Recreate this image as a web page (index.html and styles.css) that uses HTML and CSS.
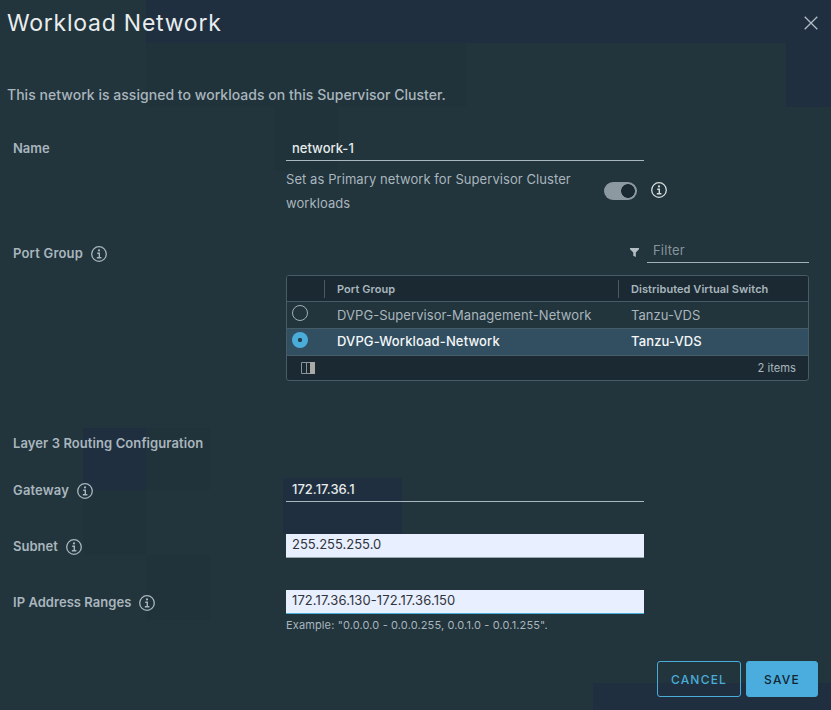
FILE: index.html
```
<!DOCTYPE html>
<html lang="en">
<head>
<meta charset="utf-8">
<title>Workload Network</title>
<link rel="stylesheet" href="styles.css">
</head>
<body>
<svg class="defs" aria-hidden="true">
  <symbol id="info" viewBox="0 0 16 16">
    <circle cx="8" cy="8" r="7.3" fill="none" stroke="currentColor" stroke-width="1.3"/>
    <circle cx="8" cy="4.4" r="1.1" fill="currentColor"/>
    <path d="M6.2 7.2h2.1v4.3M5.8 11.7h4.6" fill="none" stroke="currentColor" stroke-width="1.4"/>
  </symbol>
</svg>
<main class="dialog">
  <header class="header">
    <h1 class="title">Workload Network</h1>
    <svg class="close" viewBox="0 0 14 14"><path d="M.7.7l12.6 12.6M13.3.7L.7 13.3"/></svg>
  </header>
  <p class="intro">This network is assigned to workloads on this Supervisor Cluster.</p>

  <section class="row row-name">
    <div class="label"><span>Name</span></div>
    <div class="control">
      <div class="input"><span>network-1</span></div>
      <div class="primary">
        <p class="primary-text">Set as Primary network for Supervisor Cluster workloads</p>
        <span class="toggle"></span>
        <svg class="info info-light"><use href="#info"/></svg>
      </div>
    </div>
  </section>

  <section class="row row-port">
    <div class="label"><span class="t-port">Port Group</span><svg class="info"><use href="#info"/></svg></div>
    <div class="control">
      <div class="filter">
        <svg class="funnel" viewBox="0 0 9 9"><path d="M0 0h9v1.2L5.8 4.6V9L3.3 7.8V4.6L0 1.2z"/></svg>
        <div class="filter-input">Filter</div>
      </div>
      <div class="table">
        <div class="tr head"><span class="c1"></span><span class="c2"><b>Port Group</b></span><span class="c3"><b>Distributed Virtual Switch</b></span></div>
        <div class="tr"><span class="c1"><i class="radio"></i></span><span class="c2">DVPG-Supervisor-Management-Network</span><span class="c3">Tanzu-VDS</span></div>
        <div class="tr selected"><span class="c1"><i class="radio checked"></i></span><span class="c2">DVPG-Workload-Network</span><span class="c3">Tanzu-VDS</span></div>
        <div class="foot">
          <svg class="columns" viewBox="0 0 14 12"><path d="M.5.5h13v11H.5zM5.5 .5v11" fill="none" stroke="#8d9497"/><path d="M9 0H14v12H9z" fill="#aaa9a4"/></svg>
          <span>2 items</span>
        </div>
      </div>
    </div>
  </section>

  <h2 class="section-title">Layer 3 Routing Configuration</h2>

  <section class="row row-field">
    <div class="label"><span class="t-gateway">Gateway</span><svg class="info"><use href="#info"/></svg></div>
    <div class="control"><div class="input gateway"><span>172.17.36.1</span></div></div>
  </section>
  <section class="row row-field">
    <div class="label"><span>Subnet</span><svg class="info"><use href="#info"/></svg></div>
    <div class="control"><div class="input filled"><span>255.255.255.0</span></div></div>
  </section>
  <section class="row row-field">
    <div class="label"><span class="t-ranges">IP Address Ranges</span><svg class="info"><use href="#info"/></svg></div>
    <div class="control">
      <div class="input filled focused"><span class="t-range">172.17.36.130-172.17.36.150</span></div>
      <p class="example">Example: "0.0.0.0 - 0.0.0.255, 0.0.1.0 - 0.0.1.255".</p>
    </div>
  </section>

  <footer class="actions">
    <button class="btn cancel">CANCEL</button>
    <button class="btn save">SAVE</button>
  </footer>
</main>
</body>
</html>
```

FILE: styles.css
```
* { box-sizing: border-box; }
body {
  margin: 0;
  font-family: Inter, "Open Sans", sans-serif;
  font-size: 13px;
  color: #a9b6be;
  background: #22343c;
}
h1, h2, p { margin: 0; font-weight: 400; }
.defs { position: absolute; width: 0; height: 0; }
.dialog {
  width: 831px;
  height: 710px;
  display: flex;
  flex-direction: column;
  background-color: #22343c;
  background-image:
    linear-gradient(#202f40, #202f40), linear-gradient(#202f40, #202f40),
    linear-gradient(#202f3f, #202f3f), linear-gradient(#202f3f, #202f3f),
    linear-gradient(#202f40, #202f40), linear-gradient(#21333a, #21333a),
    linear-gradient(#21333a, #21333a), linear-gradient(#21333a, #21333a),
    linear-gradient(#21333a, #21333a), linear-gradient(#21333a, #21333a);
  background-repeat: no-repeat;
  background-position: 146px 0, 786px 0, 83px 428px, 283px 478px, 593px 683px,
    146px 43px, 274px 107px, 146px 428px, 83px 490px, 146px 555px;
  background-size: 685px 43px, 45px 107px, 63px 62px, 119px 56px, 238px 27px,
    320px 64px, 64px 64px, 64px 62px, 63px 65px, 64px 65px;
}
.header {
  height: 46px;
  padding: 0 13px 0 7px;
  display: flex;
  align-items: center;
  justify-content: space-between;
}
.title { font-size: 23px; color: #e9edee; letter-spacing: .76px; }
.close { width: 14px; height: 14px; fill: none; stroke: #b1bdc6; stroke-width: 1.3; }
.intro { margin: 38px 0 0 7px; height: 22px; line-height: 22px; font-size: 14px; font-weight: 500; letter-spacing: .03px; white-space: nowrap; }
.row { display: grid; grid-template-columns: 273px 1fr; padding-left: 13px; }
.row-name { margin-top: 30px; height: 103px; }
.row-port { height: 190px; }
.row-field { height: 56px; }
.label { height: 24px; display: flex; align-items: center; font-weight: 600; white-space: nowrap; }
.label .info { margin: 2px 0 0 8px; }
.t-port { letter-spacing: .2px; }
.t-gateway { letter-spacing: .14px; }
.t-ranges { letter-spacing: .04px; }
.row-port .label { margin-top: 2px; }
.info { width: 16px; height: 16px; flex: none; }
.info-light { color: #d7dddf; }
.input {
  width: 358px;
  height: 25px;
  padding-left: 6px;
  line-height: 24px;
  border-bottom: 1px solid #a9b7be;
  color: #e6ecec;
  font-weight: 500;
}
.gateway { height: 24px; line-height: 22px; }
.filled { height: 24px; line-height: 21px; background: #e8effe; color: #30343b; font-weight: 400; border-bottom-color: #9ca8af; }
.focused { border-bottom-color: #4aaed9; }
.t-range { letter-spacing: .1px; }
.primary { display: flex; padding-top: 6px; }
.primary-text { width: 318px; line-height: 24px; letter-spacing: .07px; }
.toggle {
  width: 33px;
  height: 18px;
  margin: 15px 14px 0 0;
  border-radius: 9px;
  background: radial-gradient(circle at 24px 9px, #1b2a32 6.5px, #8c99a1 7.2px);
}
.primary .info { margin-top: 15px; }
.filter { display: flex; height: 24px; justify-content: flex-end; padding-right: 22px; }
.funnel { width: 9px; height: 9px; margin: 9px 8px 0 0; fill: #b5c0c6; }
.filter-input { width: 162px; height: 24px; line-height: 23px; padding-left: 6px; border-bottom: 1px solid #a3b0b7; color: #87949b; letter-spacing: .2px; }
.table { width: 523px; height: 106px; margin-top: 12px; border: 1px solid #465c67; border-radius: 3px; background: #1b2a32; overflow: hidden; }
.tr { height: 27px; display: grid; grid-template-columns: 37px 294px 1fr; border-bottom: 1px solid #465c67; line-height: 27px; background: #22343c; letter-spacing: .06px; white-space: nowrap; }
.head { height: 26px; line-height: 26px; background: #1b2a32; font-size: 11px; }
.head b { font-weight: 600; }
.c2, .c3 { padding-left: 13px; }
.head .c2, .head .c3 { margin: 4px 0 3px; padding-left: 12px; line-height: 18px; border-left: 1px solid #465c67; }
.selected { background: #324f62; color: #f4f7f8; font-weight: 500; line-height: 25px; letter-spacing: .13px; }
.radio { display: block; width: 16px; height: 16px; margin: 3px 0 0 5px; border: 1px solid #a2b0b7; border-radius: 50%; }
.checked { border: 0; background: radial-gradient(circle, #263d4b 1.8px, #49acd9 2.5px); }
.foot { height: 23px; padding: 0 12px 0 14px; display: flex; align-items: center; justify-content: space-between; font-size: 11.2px; }
.columns { width: 14px; height: 12px; }
.section-title { height: 47px; margin-top: 2px; padding-left: 13px; line-height: 25px; font-size: 13px; letter-spacing: .09px; font-weight: 600; }
.example { margin-top: 3px; line-height: 16px; font-size: 11px; letter-spacing: .13px; white-space: nowrap; }
.actions { display: flex; justify-content: flex-end; gap: 5px; margin-top: 15px; padding-right: 13px; }
.btn { height: 36px; border: 1px solid #49acd9; border-radius: 3px; font: 500 12px Inter, sans-serif; letter-spacing: 1.2px; padding: 0; }
.cancel { width: 84px; background: transparent; color: #49acd9; }
.save { width: 72px; background: #4baddd; color: #102531; }
```
